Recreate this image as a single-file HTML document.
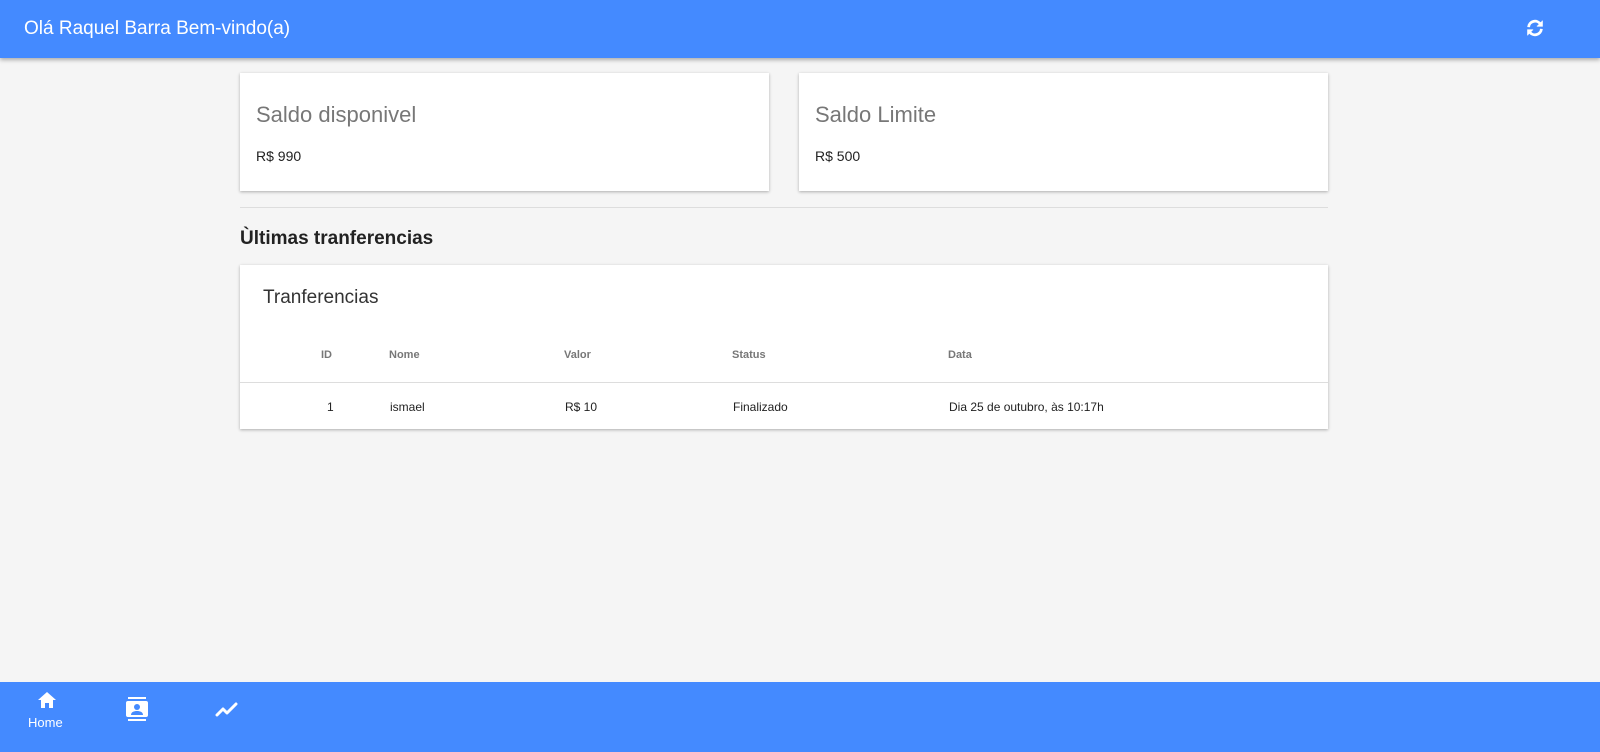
<!DOCTYPE html>
<html><head><meta charset="utf-8"><style>
*{box-sizing:border-box;margin:0;padding:0}
body{width:1600px;height:752px;background:#f5f5f5;font-family:"Liberation Sans",sans-serif;position:relative;overflow:hidden;color:#222}
.top{position:absolute;left:0;top:0;width:1600px;height:58px;background:#448aff;box-shadow:0 2px 4px rgba(0,0,0,.3);color:#fff;font-size:19px;line-height:58px;padding-left:24px}
.card{position:absolute;background:#fff;box-shadow:0 1px 3px rgba(0,0,0,.3)}
.t{position:absolute;font-size:22px;color:#777}
.v{position:absolute;font-size:14px;color:#222}
.hdr{position:absolute;top:349px;font-size:11px;font-weight:bold;color:#777}
.cel{position:absolute;top:400px;font-size:12px;color:#222}
.bot{position:absolute;left:0;top:682px;width:1600px;height:70px;background:#448aff;color:#fff}
</style></head><body>
<div class="top">Olá Raquel Barra Bem-vindo(a)
<svg style="position:absolute;left:1524px;top:17px" width="22" height="22" viewBox="0 0 24 24" fill="none" stroke="#fff" stroke-width="3"><path d="M5 11a7 7 0 0 1 13-3"/><path d="M19 13a7 7 0 0 1-13 3"/><path d="M20 4v6h-6" fill="#fff" stroke-width="1"/><path d="M4 20v-6h6" fill="#fff" stroke-width="1"/></svg></div>
<div class="card" style="left:240px;top:73px;width:529px;height:118px"><div class="t" style="left:16px;top:29px">Saldo disponivel</div><div class="v" style="left:16px;top:75px">R$ 990</div></div>
<div class="card" style="left:799px;top:73px;width:529px;height:118px"><div class="t" style="left:16px;top:29px">Saldo Limite</div><div class="v" style="left:16px;top:75px">R$ 500</div></div>
<div style="position:absolute;left:240px;top:207px;width:1088px;height:1px;background:#ddd"></div>
<div style="position:absolute;left:240px;top:228px;font-size:19px;font-weight:bold;color:#222">Ùltimas tranferencias</div>
<div class="card" style="left:240px;top:265px;width:1088px;height:164px">
<div style="position:absolute;left:23px;top:22px;font-size:19px;color:#333">Tranferencias</div>
<div style="position:absolute;left:0;top:117px;width:1088px;height:1px;background:#ddd"></div></div>
<div class="hdr" style="left:321px">ID</div><div class="hdr" style="left:389px">Nome</div><div class="hdr" style="left:564px">Valor</div><div class="hdr" style="left:732px">Status</div><div class="hdr" style="left:948px">Data</div>
<div class="cel" style="left:327px">1</div><div class="cel" style="left:390px">ismael</div><div class="cel" style="left:565px">R$ 10</div><div class="cel" style="left:733px">Finalizado</div><div class="cel" style="left:949px">Dia 25 de outubro, às 10:17h</div>
<div class="bot">
<svg style="position:absolute;left:37px;top:9px" width="20" height="18" viewBox="0 0 20 18"><path d="M10 1L1 9h3v8h4v-5h4v5h4V9h3z" fill="#fff"/></svg>
<div style="position:absolute;left:28px;top:33px;font-size:13px">Home</div>
<svg style="position:absolute;left:126px;top:15px" width="22" height="24" viewBox="0 0 22 24"><rect x="2" y="0" width="18" height="2" fill="#fff"/><rect x="2" y="22" width="18" height="2" fill="#fff"/><rect x="0" y="4" width="22" height="16" rx="2" fill="#fff"/><circle cx="11" cy="10" r="3" fill="#448aff"/><path d="M5 18c0-3 3-4 6-4s6 1 6 4z" fill="#448aff"/></svg>
<svg style="position:absolute;left:215px;top:20px" width="24" height="16" viewBox="0 0 24 16"><path d="M2 13l6-6 4 4 9-9" stroke="#fff" stroke-width="3" fill="none" stroke-linecap="round" stroke-linejoin="round"/></svg>
</div>
</body></html>
